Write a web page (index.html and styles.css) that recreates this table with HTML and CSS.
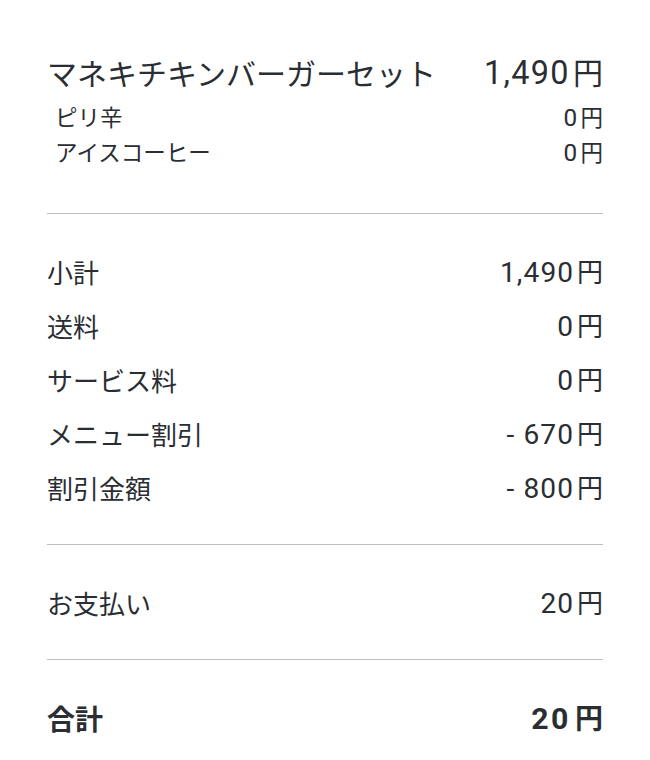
FILE: index.html
```html
<!DOCTYPE html>
<html lang="ja">
<head>
<meta charset="utf-8">
<link rel="stylesheet" href="styles.css">
</head>
<body>
<div class="card">
  <section class="item-section">
    <div class="item-main">
      <span>マネキチキンバーガーセット</span>
      <span class="amount"><span class="num">1,490</span>円</span>
    </div>
    <div class="item-sub">
      <span>ピリ辛</span>
      <span class="amount"><span class="num">0</span>円</span>
    </div>
    <div class="item-sub">
      <span>アイスコーヒー</span>
      <span class="amount"><span class="num">0</span>円</span>
    </div>
  </section>
  <section class="section">
    <div class="row"><span>小計</span><span class="amount"><span class="num">1,490</span>円</span></div>
    <div class="row"><span>送料</span><span class="amount"><span class="num">0</span>円</span></div>
    <div class="row"><span>サービス料</span><span class="amount"><span class="num">0</span>円</span></div>
    <div class="row"><span>メニュー割引</span><span class="amount"><span class="num">- 670</span>円</span></div>
    <div class="row"><span>割引金額</span><span class="amount"><span class="num">- 800</span>円</span></div>
  </section>
  <section class="section">
    <div class="row"><span>お支払い</span><span class="amount"><span class="num">20</span>円</span></div>
  </section>
  <section class="section last">
    <div class="row total"><span>合計</span><span class="amount"><span class="num">20</span>円</span></div>
  </section>
</div>
</body>
</html>
```
FILE: styles.css
```css
html, body {
  margin: 0;
  padding: 0;
  background: #ffffff;
}
body {
  font-family: "Noto Sans CJK JP", "Noto Sans", sans-serif;
  color: #2a2e33;
}
.card {
  padding: 0 47px;
}
.item-section {
  padding-top: 52px;
  padding-bottom: 44px;
  border-bottom: 1px solid #bdbdbd;
}
.item-main {
  display: flex;
  justify-content: space-between;
  align-items: center;
  font-size: 30px;
  line-height: 40px;
  height: 40px;
  margin-bottom: 7px;
}
.item-sub {
  display: flex;
  justify-content: space-between;
  align-items: center;
  font-size: 22.5px;
  line-height: 35px;
  height: 35px;
  padding-left: 8px;
}
.section {
  padding-top: 31px;
  padding-bottom: 29px;
  border-bottom: 1px solid #bdbdbd;
}
.section.last {
  border-bottom: none;
}
.row {
  display: flex;
  justify-content: space-between;
  align-items: center;
  font-size: 26px;
  line-height: 54px;
  height: 54px;
}
.amount {
  white-space: nowrap;
}
.num {
  font-family: Roboto, "Liberation Sans", sans-serif;
  font-size: 1.08em;
  letter-spacing: 0.04em;
  margin-right: 0.1em;
}
.total {
  font-size: 28px;
  font-weight: 700;
}
.total .num {
  letter-spacing: 0.08em;
  margin-right: 0.14em;
}
```
